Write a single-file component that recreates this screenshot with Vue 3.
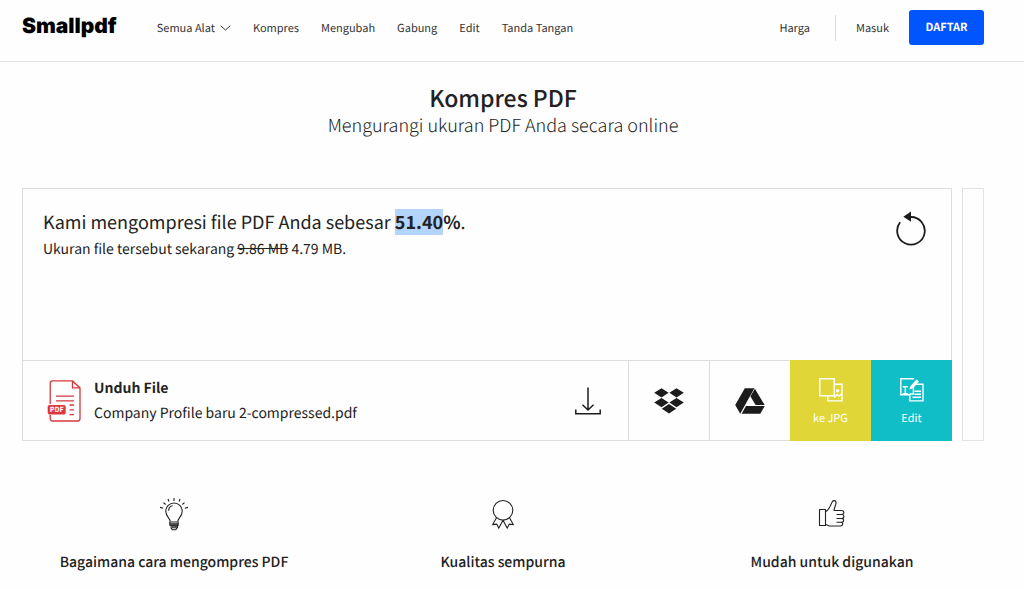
<script setup>
const links = ['Kompres', 'Mengubah', 'Gabung', 'Edit', 'Tanda Tangan']
</script>

<template>
  <div class="page">
    <header class="topbar">
      <a class="logo" href="#">Smallpdf</a>
      <nav class="menu">
        <button type="button" class="menu-item tools">
          Semua Alat
          <svg width="11" height="6" viewBox="0 0 11 6" fill="none" stroke="#333" aria-hidden="true"><path d="M.6.7 5.5 5 10.4.7" /></svg>
        </button>
        <a v-for="link in links" :key="link" class="menu-item" href="#">{{ link }}</a>
      </nav>
      <nav class="account">
        <a class="menu-item" href="#">Harga</a>
        <span class="divider"></span>
        <a class="menu-item" href="#">Masuk</a>
        <a class="signup" href="#">DAFTAR</a>
      </nav>
    </header>

    <main class="content">
      <div class="heading">
        <h1>Kompres PDF</h1>
        <p>Mengurangi ukuran PDF Anda secara online</p>
      </div>

      <div class="workspace">
        <section class="card">
          <div class="result">
            <div>
              <h2>Kami mengompresi file PDF Anda sebesar <strong><mark>51.40</mark>%</strong>.</h2>
              <p>Ukuran file tersebut sekarang <s>9.86 MB</s> 4.79 MB.</p>
            </div>
            <button type="button" class="restart" aria-label="Mulai lagi">
              <svg width="32" height="36" viewBox="0 0 32 36" fill="none" aria-hidden="true">
                <path d="M5.1 11.3A13.8 13.8 0 1 0 16 6" stroke="#1c1c1c" stroke-width="1.8" />
                <path d="M8.3 5.7 16 .6v10.200Z" fill="#1c1c1c" />
              </svg>
            </button>
          </div>

          <div class="actions">
            <button type="button" class="download">
              <svg class="file" width="34" height="42" viewBox="0 0 34 42" fill="none" stroke="#d5393d" stroke-width="1.3" aria-hidden="true">
                <path d="M3.2 24V3.2Q3.2.9 5.5.9h20l7.5 7V38.500Q33 41 30.500 41H5.500Q3.200 41 3.200 38.500V35" />
                <path d="M25.500 1v6.800H33" />
                <path d="M9 16.100h18M9 20.800h18M22.500 25h4.500M22.500 29.800h4.500M22.500 34.600h4.500" />
                <rect x=".7" y="25" width="18" height="9.600" rx="1.800" fill="#e0363b" stroke="none" />
                <text x="9.700" y="32.400" text-anchor="middle" fill="#fff" stroke="none">PDF</text>
              </svg>
              <span class="names">
                <strong>Unduh File</strong>
                <span>Company Profile baru 2-compressed.pdf</span>
              </span>
              <svg width="26" height="28" viewBox="0 0 26 28" fill="none" stroke="#1c1c1c" stroke-width="1.500" aria-hidden="true">
                <path d="M13 .5v22.500M7.500 17.700 13 23l5.500-5.300M.8 22.500v4.300h24.400v-4.300" />
              </svg>
            </button>
            <button type="button" class="square" aria-label="Simpan ke Dropbox">
              <svg width="30" height="26" viewBox="0 0 30 26" fill="#1c1c1c" aria-hidden="true">
                <path d="M7.500.2 14.600 4.800 7.500 9.400.2 4.800ZM22.500.2 29.800 4.800 22.500 9.400 15.400 4.800ZM7.500 10 14.600 14.600 7.500 19.200.2 14.600ZM22.500 10 29.800 14.600 22.500 19.200 15.400 14.600ZM15 16 22.200 20.700 15 25.500 7.800 20.700Z" />
              </svg>
            </button>
            <button type="button" class="square" aria-label="Simpan ke Google Drive">
              <svg width="30" height="26" viewBox="0 0 30 26" fill="#1c1c1c" aria-hidden="true">
                <path d="M9.800.3h9.600L5.200 25.700.2 17ZM19.900.7 29.700 17.100H20.600L15.400 8.300ZM11 18h18.800l-4.500 7.700H6.600Z" />
              </svg>
            </button>
            <button type="button" class="square yellow">
              <svg width="24" height="24" viewBox="0 0 24 24" fill="none" stroke="#fff" stroke-width="1.400" aria-hidden="true">
                <path d="M.8.800h14.400v16.900H.8ZM15.200 6.200h7.800v16.700H8.800v-5.200M15.200 19.500l3-3.100 1.900 1.600 2.900-2.500" />
                <circle cx="18.700" cy="12.700" r="1.700" fill="#fff" stroke="none" />
              </svg>
              <span>ke JPG</span>
            </button>
            <button type="button" class="square teal">
              <svg width="24" height="24" viewBox="0 0 24 24" fill="none" stroke="#fff" stroke-width="1.400" aria-hidden="true">
                <path d="M10.500 16.800H.8V.8h13.400M14.500 6.200H23v16.700H9.800V15.500M13.400 8.500v7.500h-3M2.800 8.700h5M5.300 8.700v6.900M2.800 15.600h5M14.500 13.200h6.500M14.500 16.200h6.500M12.500 19.200h8.500" />
                <path d="M9.400 11.500 10.200 8.400 16.600 1.400 18.800 3.500 12.200 10.400Z" fill="#fff" stroke="none" />
                <path d="M12 9 17.300 3.100" stroke-width="3" />
              </svg>
              <span>Edit</span>
            </button>
          </div>
        </section>
        <aside class="side"></aside>
      </div>

      <section class="features">
        <article>
          <svg width="30" height="34" viewBox="0 0 30 34" fill="none" stroke="#222" stroke-width="1.100" aria-hidden="true">
            <path d="M11.200 23.500C11 20 6.800 18.700 6.800 13.200a8.200 8.200 0 0 1 16.400 0c0 5.500-4.200 6.800-4.400 10.300M9.700 12.800c0-2.500 1.500-4.700 4-5" />
            <path d="M10.800 24h8.400v3.200h-8.400ZM11.500 27.200h7v2.500h-7M12 29.700l1.200 2h3.600l1.200-2M15 0v3M9 .8l.9 2.700M21 .8l-.9 2.700M4.500 4.600l2.200 1.900M25.500 4.600l-2.200 1.900M1 9.400l3.200.8M29 9.400l-3.200.8" />
            <path d="M11 26h8M11.500 28h7" stroke-width="1.500" />
          </svg>
          <h3>Bagaimana cara mengompres PDF</h3>
        </article>
        <article>
          <svg width="30" height="34" viewBox="0 0 30 34" fill="none" stroke="#222" stroke-width="1.100" aria-hidden="true">
            <circle cx="15" cy="12.300" r="9.800" />
            <path d="M8.500 19.700 4.700 26.500l4-.4L10.800 30l4.200-7.700M21.500 19.700l3.800 6.800-4-.4-2.100 3.900-4.200-7.700" />
          </svg>
          <h3>Kualitas sempurna</h3>
        </article>
        <article>
          <svg width="30" height="34" viewBox="0 0 30 34" fill="none" stroke="#222" stroke-width="1.100" stroke-linejoin="round" aria-hidden="true">
            <path d="M2.500 11.500h6v16h-6ZM8.500 13.700c3.700-2 5-5.500 6.300-9.100C16 1.500 19.500 2.200 19 5.200c-.4 2.600-1.700 4.500-2 7.300h7.200c3.500 0 3.500 3.800.4 4M19.500 16.500h5c3.200 0 3.200 4 0 4M19.500 20.500h5c2.900 0 2.900 3.800-.3 3.800M19.500 24.300h4.500c2.500 0 2.200 3.700-.5 3.700H12.500c-1.500 0-2.200-1.400-4-1.500" />
          </svg>
          <h3>Mudah untuk digunakan</h3>
        </article>
      </section>
    </main>
  </div>
</template>

<style>
body {
  background: #fefefe;
}
</style>

<style scoped>
.page {
  font-family: "Noto Sans CJK SC", "Noto Sans", sans-serif;
  color: #222;
  text-rendering: geometricPrecision;
}
.page * {
  box-sizing: border-box;
}
h1, h2, h3, p {
  margin: 0;
}
button {
  font: inherit;
  color: inherit;
  background: none;
  border: 0;
  padding: 0;
  cursor: pointer;
  text-rendering: inherit;
}
a {
  color: inherit;
  text-decoration: none;
}
svg {
  display: block;
  flex: none;
}
.topbar {
  display: flex;
  align-items: center;
  height: 62px;
  padding: 0 40px 6px 22px;
  border-bottom: 1px solid #e4e4e4;
}
.logo {
  font: 900 21px/28px Inter, sans-serif;
  color: #000;
  padding-bottom: 2px;
  margin-right: 40px;
}
.menu {
  display: flex;
  gap: 22px;
}
.menu-item {
  font-size: 11px;
  line-height: 20px;
  color: #333;
}
.tools {
  display: flex;
  align-items: center;
  gap: 5px;
}
.account {
  display: flex;
  align-items: center;
  gap: 20px;
  margin-left: auto;
}
.divider {
  width: 1px;
  height: 26px;
  margin-left: 5px;
  background: #ddd;
}
.signup {
  min-width: 75px;
  border-radius: 3px;
  background: #0055ff;
  color: #fff;
  font-size: 11px;
  font-weight: 700;
  line-height: 35px;
  text-align: center;
}
.content {
  padding: 20px 40px 16px 22px;
}
.heading {
  text-align: center;
}
h1 {
  font-size: 23px;
  font-weight: 500;
  line-height: 30px;
}
.heading p {
  font-size: 18px;
  font-weight: 300;
  line-height: 26px;
}
.workspace {
  display: flex;
  gap: 10px;
  margin-top: 50px;
}
.card {
  flex: 1;
  border: 1px solid #ddd;
}
.side {
  width: 22px;
  border: 1px solid #e2e2e2;
}
.result {
  display: flex;
  justify-content: space-between;
  align-items: flex-start;
  min-height: 171px;
  padding: 20px 24px 20px 20px;
}
h2 {
  font-size: 18px;
  font-weight: 400;
  line-height: 26px;
}
h2 strong {
  font-weight: 700;
}
mark {
  display: inline-block;
  color: inherit;
  background: #b3d4fc;
}
.result p {
  font-size: 14px;
  line-height: 28px;
}
.restart {
  margin-top: 2px;
}
.actions {
  display: flex;
  height: 81px;
  margin: 0 -1px -1px 0;
}
.download {
  flex: 1;
  display: flex;
  align-items: center;
  padding: 0 27px 0 24px;
  border-top: 1px solid #ddd;
  text-align: left;
}
.file text {
  font: 700 7px "Noto Sans CJK SC", sans-serif;
}
.names {
  flex: 1;
  display: flex;
  flex-direction: column;
  margin-left: 13px;
  font-size: 14px;
  line-height: 25px;
}
.square {
  flex: none;
  display: flex;
  flex-direction: column;
  align-items: center;
  justify-content: center;
  gap: 6px;
  width: 81px;
  border-top: 1px solid #ddd;
  border-left: 1px solid #ddd;
  font-size: 11px;
  line-height: 20px;
}
.yellow,
.teal {
  padding-top: 5px;
  border: 0;
  color: #fff;
}
.yellow {
  background: #e1d637;
}
.teal {
  background: #10bec7;
}
.features {
  display: grid;
  grid-template-columns: repeat(3, 1fr);
  gap: 25px;
  margin-top: 57px;
}
article {
  display: flex;
  flex-direction: column;
  align-items: center;
  gap: 18px;
}
h3 {
  font-size: 14px;
  font-weight: 500;
  line-height: 24px;
}
</style>
